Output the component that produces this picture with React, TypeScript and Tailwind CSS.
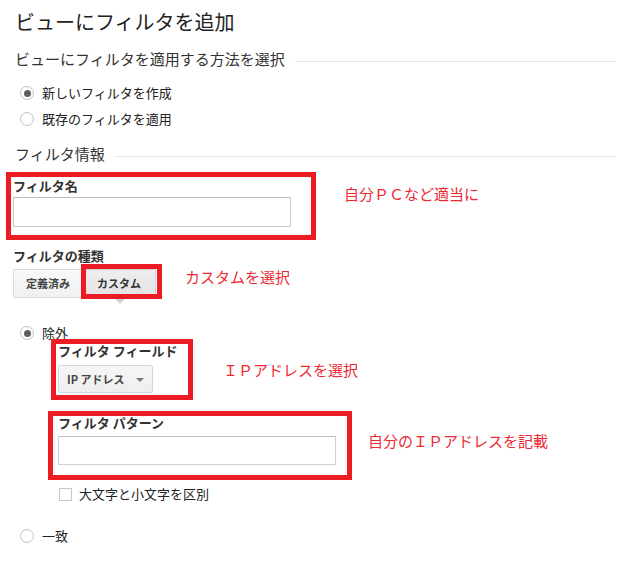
import React from "react";

function Radio({ checked }: { checked?: boolean }) {
  return (
    <span className="w-[14px] h-[14px] rounded-full border border-[#c2c2c2] bg-white flex items-center justify-center shrink-0">
      {checked && <span className="w-[7px] h-[7px] rounded-full bg-[#5f5f5f]" />}
    </span>
  );
}

function RedFrame({ className }: { className: string }) {
  return (
    <div
      className={
        "absolute border-[5px] border-[#ed1c24] pointer-events-none " + className
      }
    />
  );
}

export default function App() {
  return (
    <div className="w-[624px] h-[574px] bg-white overflow-hidden text-[#222] font-['Noto_Sans_CJK_JP','Noto_Sans',sans-serif]">
      <div className="flex flex-col pl-[13px] pt-[8px]">
        {/* Title */}
        <h1 className="ml-[2px] text-[20px] leading-[28px] font-normal text-[#222]">
          ビューにフィルタを追加
        </h1>

        {/* Subtitle with rule */}
        <div className="ml-[2px] mt-[13px] flex items-center h-[20px]">
          <span className="text-[15px] leading-[20px] text-[#333] whitespace-nowrap">
            ビューにフィルタを適用する方法を選択
          </span>
          <div className="flex-1 h-px bg-[#e3e3e3] ml-[10px] mr-[8px] mt-[4px]" />
        </div>

        {/* radio choices */}
        <div className="ml-[7px] mt-[11px] flex flex-col">
          <div className="h-[26px] flex items-center gap-[8px]">
            <Radio checked />
            <span className="text-[13px] leading-[18px]">新しいフィルタを作成</span>
          </div>
          <div className="h-[26px] flex items-center gap-[8px]">
            <Radio />
            <span className="text-[13px] leading-[18px]">既存のフィルタを適用</span>
          </div>
        </div>

        {/* Filter info */}
        <div className="ml-[2px] mt-[12px] flex items-center h-[20px]">
          <span className="text-[15px] leading-[20px] text-[#333] whitespace-nowrap">
            フィルタ情報
          </span>
          <div className="flex-1 h-px bg-[#e3e3e3] ml-[10px] mr-[8px] mt-[4px]" />
        </div>

        {/* Filter name */}
        <div className="mt-[13px] flex items-start">
          <div className="relative w-[278px]">
            <div className="text-[13px] leading-[18px] font-bold text-[#333]">フィルタ名</div>
            <div className="mt-[2px] w-[278px] h-[30px] border border-[#cbcbcb] border-t-[#bdbdbd] bg-white" />
            <RedFrame className="left-[-7px] top-[-5px] w-[310px] h-[68px]" />
          </div>
          <span className="ml-[53px] mt-[7px] text-[15px] leading-[20px] text-[#ec2a33] whitespace-nowrap">
            自分ＰＣなど適当に
          </span>
        </div>

        {/* Filter type */}
        <div className="mt-[20px] text-[13px] leading-[18px] font-bold text-[#333]">
          フィルタの種類
        </div>
        <div className="mt-[4px] flex items-start">
          <div className="w-[70px] h-[29px] flex items-center justify-center border border-[#dadada] rounded-l-[2px] bg-gradient-to-b from-[#f8f8f8] to-[#f0f0f0] text-[11px] font-bold text-[#444]">
            定義済み
          </div>
          <div className="relative">
            <div className="w-[73px] h-[29px] flex items-center justify-center border border-[#cfcfcf] border-l-0 bg-gradient-to-b from-[#eeeeee] to-[#e3e3e3] text-[11px] font-bold text-[#333]">
              カスタム
            </div>
            <div className="absolute top-[29px] left-[31px] w-0 h-0 border-l-[6px] border-r-[6px] border-t-[6px] border-l-transparent border-r-transparent border-t-[#d4d4d4]" />
            <RedFrame className="left-[-2px] top-[-5px] w-[81px] h-[35px]" />
          </div>
          <span className="ml-[29px] -mt-[2px] text-[15px] leading-[20px] text-[#ec2a33] whitespace-nowrap">
            カスタムを選択
          </span>
        </div>

        {/* Exclude */}
        <div className="ml-[7px] mt-[24px] h-[22px] flex items-center gap-[8px]">
          <Radio checked />
          <span className="text-[13px] leading-[18px]">除外</span>
        </div>

        {/* Filter field */}
        <div className="ml-[45px] -mt-[1px] flex items-start">
          <div className="relative w-[120px]">
            <div className="text-[13px] leading-[16px] font-bold text-[#333] whitespace-nowrap">
              フィルタ フィールド
            </div>
            <div className="mt-[6px] w-[95px] h-[28px] flex items-center pl-[8px] border border-[#d8d8d8] rounded-[2px] bg-gradient-to-b from-[#f6f6f6] to-[#eeeeee]">
              <span className="text-[11px] font-bold text-[#444] whitespace-nowrap">IP アドレス</span>
              <span className="ml-[12px] mt-[1px] w-0 h-0 border-l-[4px] border-r-[4px] border-t-[4px] border-l-transparent border-r-transparent border-t-[#777]" />
            </div>
            <RedFrame className="left-[-7px] top-[-4px] w-[142px] h-[61px]" />
          </div>
          <span className="ml-[45px] mt-[17px] text-[15px] leading-[20px] text-[#ec2a33] whitespace-nowrap">
            ＩＰアドレスを選択
          </span>
        </div>

        {/* Filter pattern */}
        <div className="ml-[45px] mt-[22px] flex items-start">
          <div className="relative w-[278px]">
            <div className="text-[13px] leading-[16px] font-bold text-[#333] whitespace-nowrap">
              フィルタ パターン
            </div>
            <div className="mt-[5px] w-[278px] h-[29px] border border-[#d0d0d0] border-t-[#c0c0c0] bg-white" />
            <RedFrame className="left-[-10px] top-[-4px] w-[304px] h-[69px]" />
          </div>
          <span className="ml-[32px] mt-[16px] text-[15px] leading-[20px] text-[#ec2a33] whitespace-nowrap">
            自分のＩＰアドレスを記載
          </span>
        </div>

        {/* Case sensitive */}
        <div className="ml-[46px] mt-[20px] h-[18px] flex items-center gap-[7px]">
          <span className="w-[13px] h-[13px] border border-[#c6c6c6] bg-white shrink-0" />
          <span className="text-[13px] leading-[18px]">大文字と小文字を区別</span>
        </div>

        {/* Match */}
        <div className="ml-[7px] mt-[22px] h-[22px] flex items-center gap-[8px]">
          <Radio />
          <span className="text-[13px] leading-[18px]">一致</span>
        </div>
      </div>
    </div>
  );
}
